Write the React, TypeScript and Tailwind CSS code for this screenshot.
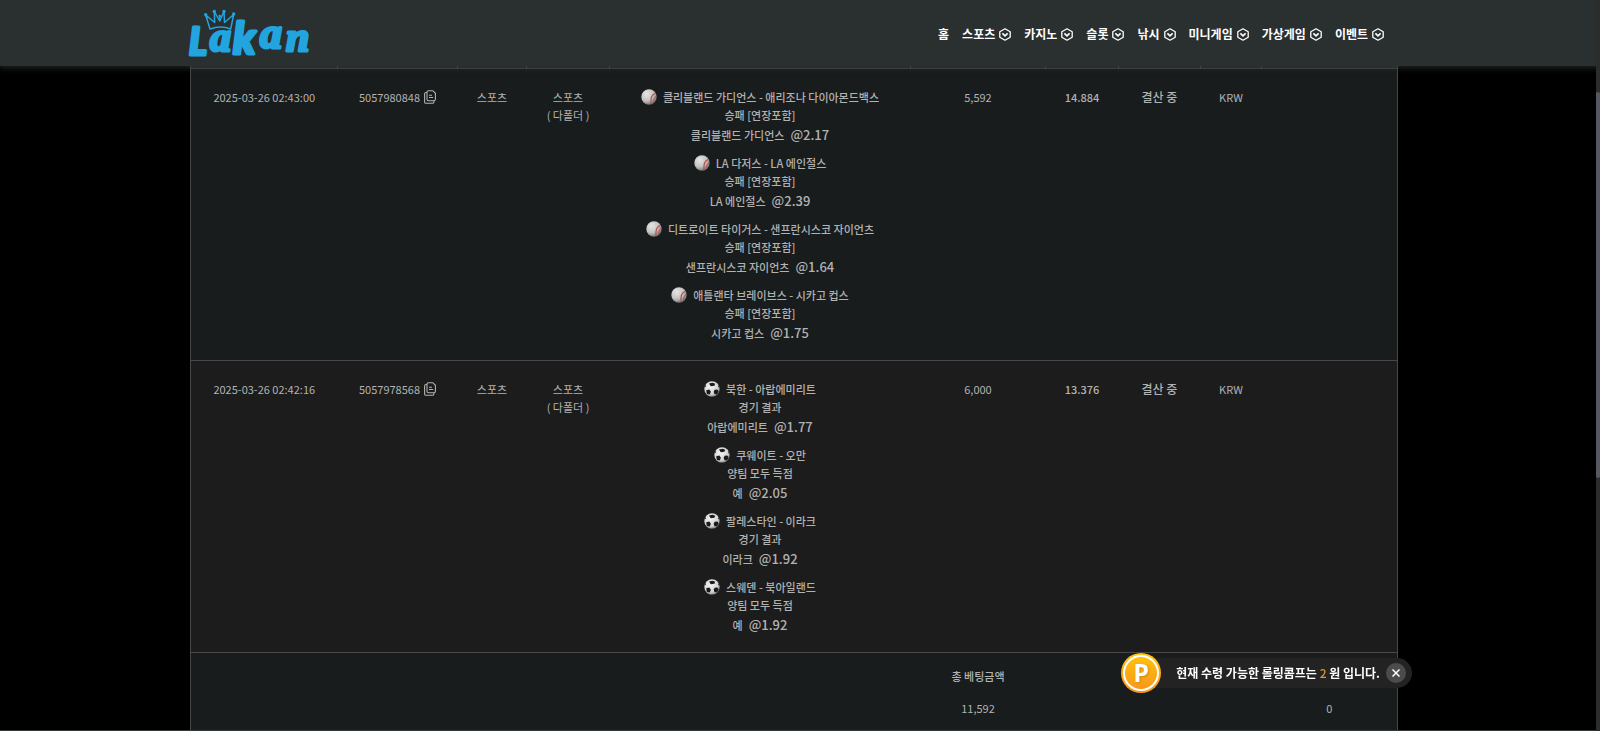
import type { ReactNode } from 'react';

type Leg = { match: string; market: string; pick: string; odds: string };

type Bet = {
  date: string;
  id: string;
  amount: string;
  odds: string;
  sport: 'baseball' | 'soccer';
  legs: Leg[];
};

const menu = ['스포츠', '카지노', '슬롯', '낚시', '미니게임', '가상게임', '이벤트'];

const bets: Bet[] = [
  {
    date: '2025-03-26 02:43:00',
    id: '5057980848',
    amount: '5,592',
    odds: '14.884',
    sport: 'baseball',
    legs: [
      { match: '클리블랜드 가디언스 - 애리조나 다이아몬드백스', market: '승패 [연장포함]', pick: '클리블랜드 가디언스', odds: '@2.17' },
      { match: 'LA 다저스 - LA 에인절스', market: '승패 [연장포함]', pick: 'LA 에인절스', odds: '@2.39' },
      { match: '디트로이트 타이거스 - 샌프란시스코 자이언츠', market: '승패 [연장포함]', pick: '샌프란시스코 자이언츠', odds: '@1.64' },
      { match: '애틀랜타 브레이브스 - 시카고 컵스', market: '승패 [연장포함]', pick: '시카고 컵스', odds: '@1.75' },
    ],
  },
  {
    date: '2025-03-26 02:42:16',
    id: '5057978568',
    amount: '6,000',
    odds: '13.376',
    sport: 'soccer',
    legs: [
      { match: '북한 - 아랍에미리트', market: '경기 결과', pick: '아랍에미리트', odds: '@1.77' },
      { match: '쿠웨이트 - 오만', market: '양팀 모두 득점', pick: '예', odds: '@2.05' },
      { match: '팔레스타인 - 이라크', market: '경기 결과', pick: '이라크', odds: '@1.92' },
      { match: '스웨덴 - 북아일랜드', market: '양팀 모두 득점', pick: '예', odds: '@1.92' },
    ],
  },
];

function Logo() {
  return (
    <svg width="121" height="50" viewBox="0 0 121 50" className="overflow-visible" role="img" aria-label="Lakan" fill="#22a4df">
      <g stroke="#22a4df" strokeWidth="3" strokeLinejoin="round" fontStyle="italic">
        <g fontFamily="Lato, sans-serif" fontWeight="900">
          <text x="-1" y="46" fontSize="37">L</text>
          <text x="43" y="45" fontSize="44">k</text>
        </g>
        <g fontFamily="Liberation Serif, serif" fontWeight="700">
          <text x="20" y="42" fontSize="42">a</text>
          <text x="70" y="39" fontSize="44">a</text>
          <text x="96" y="42" fontSize="42">n</text>
        </g>
      </g>
      {/* crown */}
      <path
        d="M20 20 15.700 6l9 7.500-.4-11L29.700 12 34 2.500l.5 11 9.200-8L40.700 20q-10-4-20.700 0z"
        fill="#2a2f2f"
        stroke="#22a4df"
        strokeWidth="1.500"
        strokeLinejoin="round"
      />
      <path d="M29.700 7v5" fill="none" stroke="#22a4df" strokeWidth="1.300" />
      <circle cx="15.700" cy="5.800" r="1.700" />
      <circle cx="24.300" cy="2.500" r="1.700" />
      <circle cx="29.700" cy="7" r="1.300" />
      <circle cx="34" cy="2.500" r="1.700" />
      <circle cx="43.700" cy="5" r="1.700" />
    </svg>
  );
}

function HexChevron() {
  return (
    <svg width="12" height="13" viewBox="0 0 12 13" fill="none" stroke="currentColor" strokeWidth="1.3" aria-hidden="true">
      <path d="M6 .8 11.200 3.700v5.600L6 12.200.8 9.300V3.700z" strokeLinejoin="round" />
      <path d="m3.400 5.400 2.600 2.400 2.600-2.400" strokeWidth="1.700" />
    </svg>
  );
}

function CopyIcon() {
  return (
    <svg width="12" height="14" viewBox="0 0 12 14" fill="none" stroke="currentColor" strokeWidth="1.1" aria-hidden="true">
      <path d="M4.500.7h4.300l2.600 2.600v6a1.500 1.500 0 0 1-1.500 1.500H4.500A1.500 1.500 0 0 1 3 9.300V2.200A1.500 1.500 0 0 1 4.500.7z" />
      <path d="M3 2.500H2A1.400 1.400 0 0 0 .6 3.900v8A1.400 1.400 0 0 0 2 13.300h6.500a1.400 1.400 0 0 0 1.400-1.400v-1" />
      <path d="M5 5.200h3M5 7.500h4.200" />
    </svg>
  );
}

function Baseball() {
  return (
    <svg width="16" height="16" viewBox="0 0 16 16" aria-hidden="true">
      <defs>
        <radialGradient id="leather" cx="35%" cy="30%" r="75%">
          <stop offset="0" stopColor="#e6e6e6" />
          <stop offset="0.6" stopColor="#c4c2c1" />
          <stop offset="1" stopColor="#6d6968" />
        </radialGradient>
      </defs>
      <circle cx="8" cy="8" r="7.700" fill="url(#leather)" />
      <path d="M14 4.500C11 5.500 9.600 9.500 10 14.600" fill="none" stroke="#b8484a" strokeWidth="1.100" />
      <path d="M15.200 7c-1.700 1.500-2.600 3.500-2.700 6" fill="none" stroke="#b8484a" strokeWidth="0.800" />
    </svg>
  );
}

function SoccerBall() {
  return (
    <svg width="16" height="16" viewBox="0 0 16 16" aria-hidden="true">
      <defs>
        <radialGradient id="ball" cx="40%" cy="35%" r="70%">
          <stop offset="0" stopColor="#f4f4f4" />
          <stop offset="0.700" stopColor="#d2d2d2" />
          <stop offset="1" stopColor="#777" />
        </radialGradient>
      </defs>
      <circle cx="8" cy="8" r="7.700" fill="url(#ball)" />
      <g fill="#1b1b1b">
        <path d="M5 2.600 8.500 1.800l2.700 1-.8 2-3.700.4z" />
        <path d="m2.200 9.200 3.200-.6 1.500 2.200-1.100 2.700-2.900-.5z" />
        <path d="m10.600 8.700 2.800-.3 1.300 2.100-1.700 3.100-2.600-.5-.7-2.300z" />
        <path d="M.5 6.200 1.600 3.800l.5 1.800zM14.200 3.700l1.300 2.800-1.300-.6zM6.800 15.600l2.300-.4.800.3z" />
      </g>
    </svg>
  );
}

function Cell({ children, className = '' }: { children?: ReactNode; className?: string }) {
  return <td className={`pt-[19px] align-top ${className}`}>{children}</td>;
}

function BetRow({ bet, className }: { bet: Bet; className: string }) {
  return (
    <tr className={`border-y border-[#484848] ${className}`}>
      <Cell>{bet.date}</Cell>
      <Cell>
        <div className="flex items-center justify-center gap-1">
          {bet.id}
          <button type="button" aria-label="복사">
            <CopyIcon />
          </button>
        </div>
      </Cell>
      <Cell>스포츠</Cell>
      <Cell>
        스포츠
        <br />( 다폴더 )
      </Cell>
      <Cell className="pb-2 font-medium">
        {bet.legs.map((leg) => (
          <div key={leg.match} className="mb-2">
            <div className="flex items-center justify-center gap-[6px]">
              {bet.sport === 'baseball' ? <Baseball /> : <SoccerBall />}
              {leg.match}
            </div>
            <div>{leg.market}</div>
            <div className="flex h-[22px] items-baseline justify-center gap-[6px] leading-[22px]">
              {leg.pick}
              <span className="text-[13px] leading-[22px]">{leg.odds}</span>
            </div>
          </div>
        ))}
      </Cell>
      <Cell>{bet.amount}</Cell>
      <Cell className="font-medium">{bet.odds}</Cell>
      <Cell className="text-xs leading-[18px] font-medium">결산 중</Cell>
      <Cell>KRW</Cell>
      <Cell />
    </tr>
  );
}

export default function App() {
  return (
    <div className="relative h-screen overflow-hidden bg-black font-['Noto_Sans_CJK_KR',sans-serif] text-[11px] leading-[18px] text-[#b2b2b2]">
      <header className="relative z-10 h-[66px] bg-[#2a2f2f] pt-0.5 pr-3 shadow-[0_2px_6px_rgba(42,47,47,0.8)]">
        <div className="mx-auto flex h-full w-[1208px] items-center justify-between pr-[14px]">
          <a href="#" className="block">
            <Logo />
          </a>
          <nav className="flex items-center gap-[13px] text-xs font-bold text-white">
            <a href="#">홈</a>
            {menu.map((item) => (
              <a key={item} href="#" className="flex items-center gap-1">
                {item}
                <HexChevron />
              </a>
            ))}
          </nav>
        </div>
      </header>

      <main className="pr-3">
        <table className="mx-auto w-[1208px] table-fixed border-collapse border-x border-[#484848] text-center">
          <colgroup>
            <col className="w-[147px]" />
            <col className="w-[120px]" />
            <col className="w-[69px]" />
            <col className="w-[83px]" />
            <col className="w-[301px]" />
            <col className="w-[135px]" />
            <col className="w-[73px]" />
            <col className="w-[82px]" />
            <col className="w-[61px]" />
            <col />
          </colgroup>
          <tbody>
            {/* lower edge of the column heads, scrolled under the bar */}
            <tr className="h-[2px] bg-[#2a2f2f]">
              {Array.from({ length: 10 }, (_, i) => (
                <td key={i} className="border-x border-[#585858] p-0" />
              ))}
            </tr>
            <BetRow bet={bets[0]} className="bg-[#181c1d]" />
            <BetRow bet={bets[1]} className="bg-[#1c1c1c]" />
          </tbody>
          <tfoot className="bg-[#181c1d]">
            <tr>
              <td colSpan={5} />
              <td className="pt-[14px] font-medium">총 베팅금액</td>
              <td colSpan={4} />
            </tr>
            <tr>
              <td colSpan={5} />
              <td className="pt-[14px] pb-4">11,592</td>
              <td colSpan={3} />
              <td className="pt-[14px] pb-4">0</td>
            </tr>
          </tfoot>
        </table>
      </main>

      {/* comp point notice */}
      <aside className="fixed right-[188px] bottom-[43px] z-20 flex h-[30px] items-center rounded-full bg-[#232323] pr-[6px]">
        <svg width="40" height="40" viewBox="0 0 40 40" aria-hidden="true">
          <defs>
            <linearGradient id="coin" x1="0" y1="0" x2="0" y2="1">
              <stop offset="0" stopColor="#ffc60a" />
              <stop offset="1" stopColor="#f7931e" />
            </linearGradient>
          </defs>
          <circle cx="20" cy="20" r="20" fill="url(#coin)" />
          <circle cx="20" cy="20" r="17" fill="none" stroke="#fff" strokeWidth="2" />
          <g textAnchor="middle" fontFamily="Open Sans, sans-serif" fontWeight="700" fontSize="25">
            <text x="20" y="29" fill="#fff" style={{ filter: 'drop-shadow(1px 1px 1px rgba(190,110,0,0.6))' }}>
              P
            </text>
          </g>
        </svg>
        <p className="ml-[15px] text-xs font-bold text-white">
          현재 수령 가능한 롤링콤프는 <span className="font-medium text-[#d99430]">2</span> 원 입니다.
        </p>
        <button type="button" aria-label="닫기" className="ml-[6px] grid size-5 place-items-center rounded-full bg-[#4c4c4c] text-white">
          <svg width="8" height="8" viewBox="0 0 8 8" stroke="currentColor" strokeWidth="1.500" aria-hidden="true">
            <path d="m.5.5 7 7M7.500.5l-7 7" />
          </svg>
        </button>
      </aside>

      <div className="absolute inset-y-0 right-0 z-20 w-1 bg-[#2a2d29] pt-[92px]">
        <div className="h-[386px] rounded-sm bg-[#555861]" />
      </div>
      <div className="absolute inset-x-0 bottom-0 h-px bg-[#333c38]" />
    </div>
  );
}
